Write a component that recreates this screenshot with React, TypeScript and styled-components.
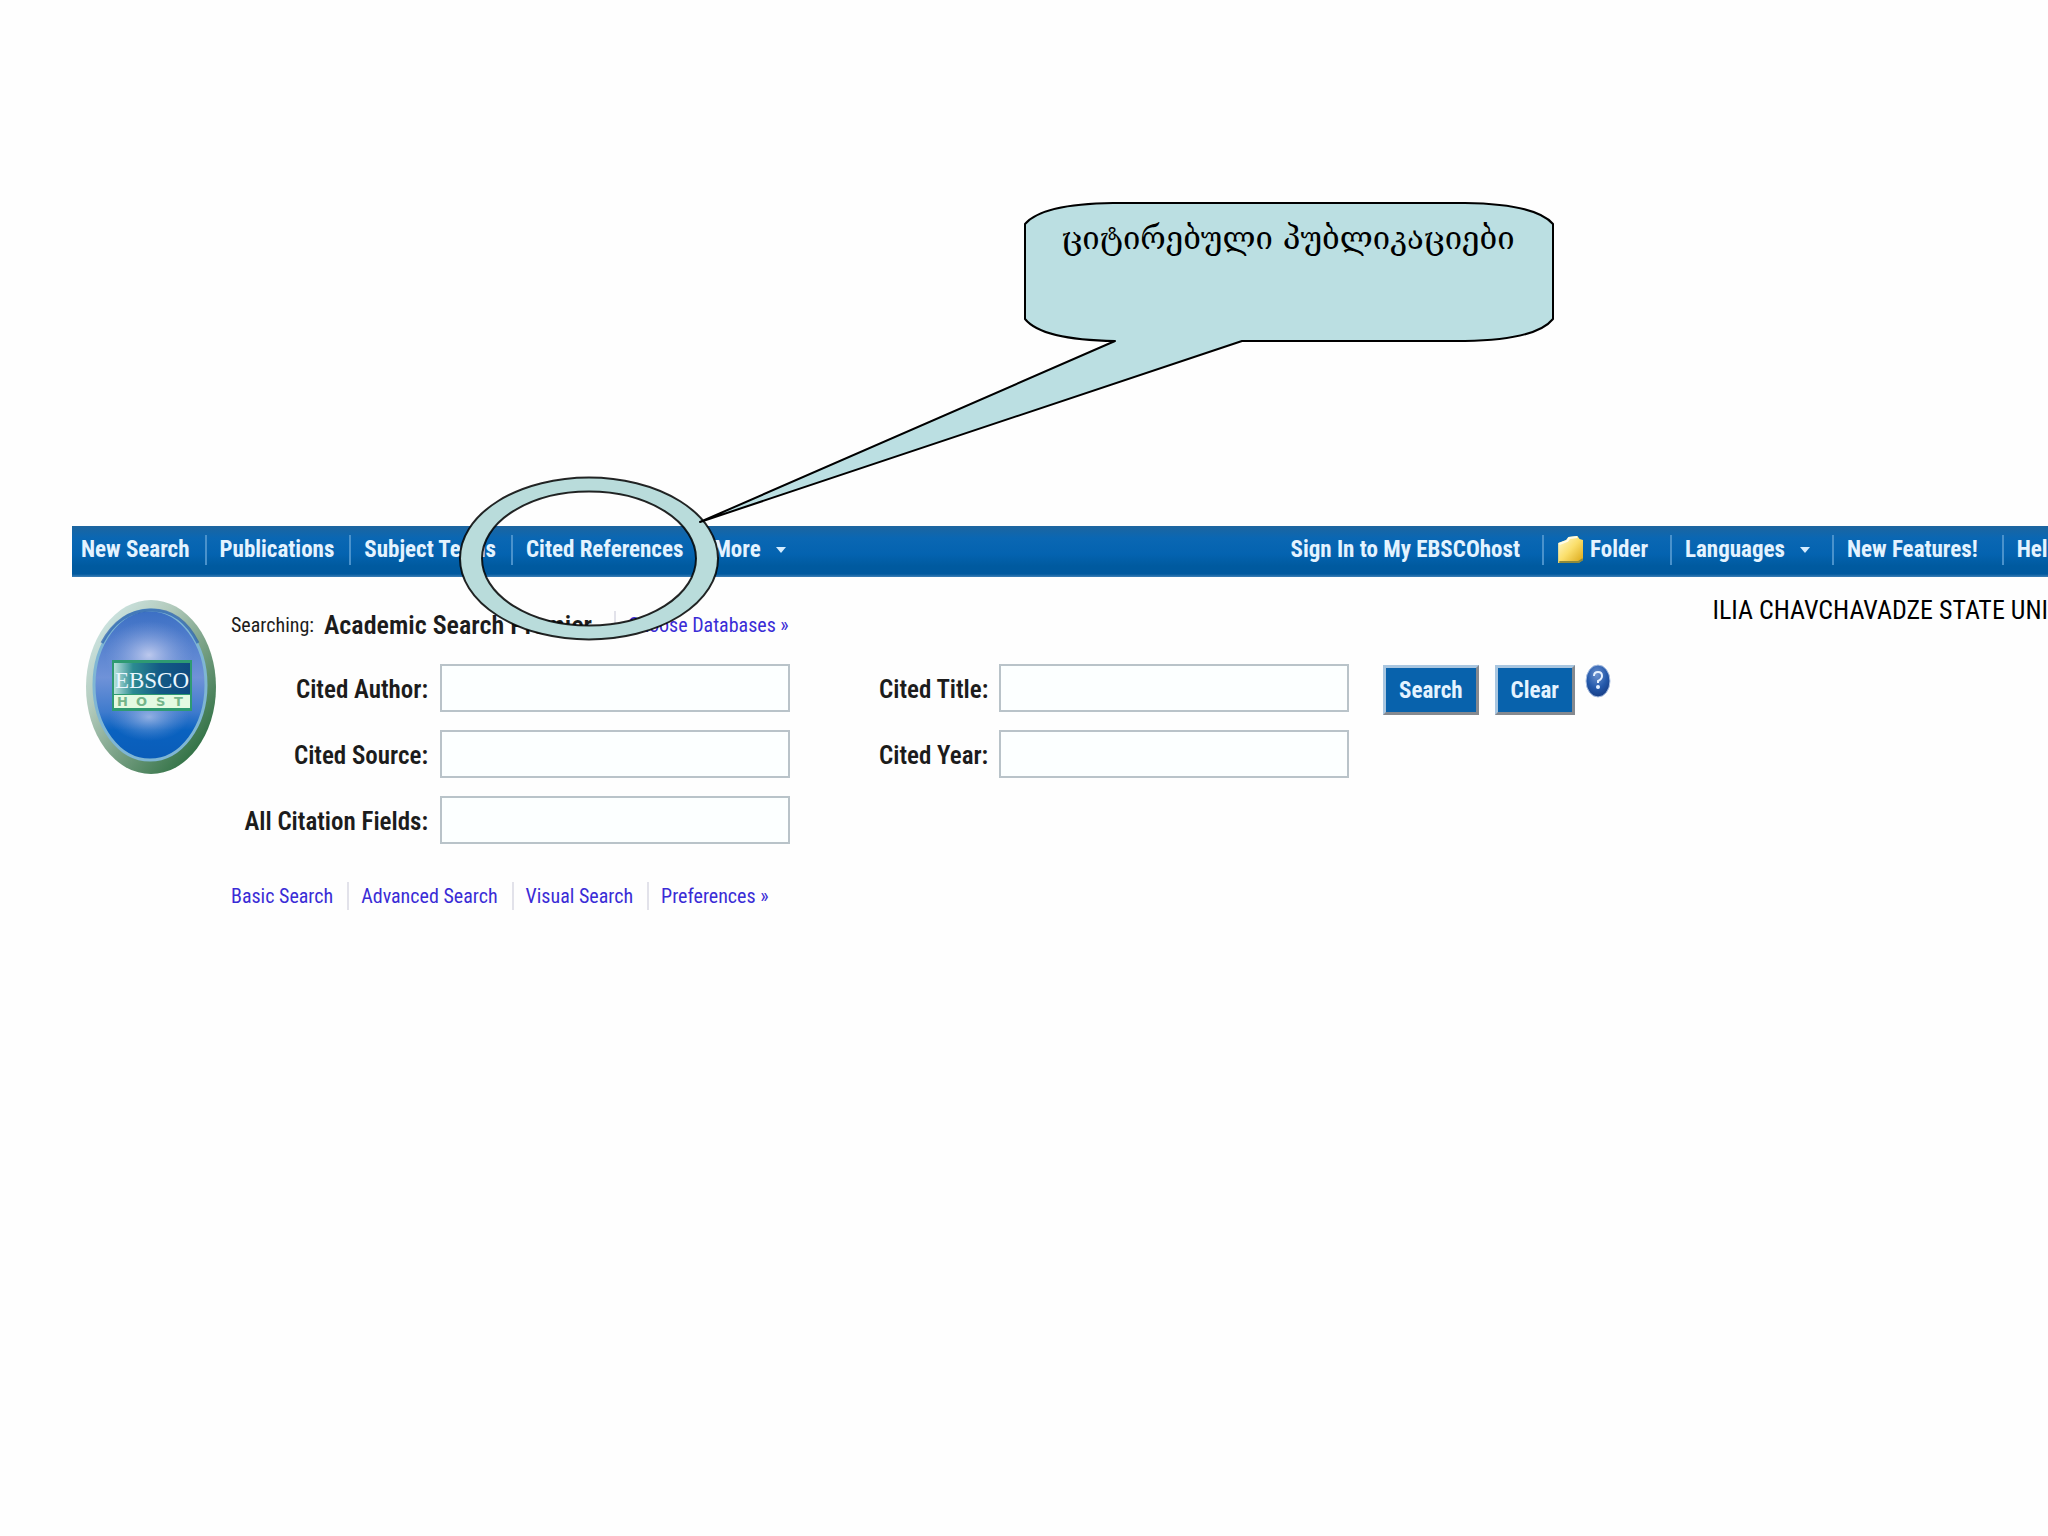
import React from 'react';
import styled, { createGlobalStyle } from 'styled-components';

const GlobalStyle = createGlobalStyle`
  *, *::before, *::after { box-sizing: border-box; }
  body {
    margin: 0;
    background: #fefefe;
    color: #1c1c1c;
    font-family: "Roboto Condensed", Roboto, "Liberation Sans", sans-serif;
  }
`;

const Page = styled.div`
  position: relative;
  overflow: hidden;
  min-height: 100vh;
  padding: 526px 0 0 72px;
`;

const NavBar = styled.nav`
  display: flex;
  align-items: center;
  justify-content: space-between;
  height: 51px;
  padding: 0 0 4px 9px;
  background: linear-gradient(#1d659f 0, #0a67b3 12px, #0463b0 28px, #005a9f 40px, #00599f 48px, #3d7fb6 51px);
`;

const NavGroup = styled.ul<{ $end?: boolean }>`
  display: flex;
  flex: none;
  margin: 0;
  margin-right: ${(p) => (p.$end ? '-11px' : '0')};
  padding: 0;
  list-style: none;
`;

const NavItem = styled.li<{ $gap?: number }>`
  display: flex;
  align-items: center;
  height: 30px;

  &:not(:first-child) {
    margin-left: ${(p) => p.$gap ?? 15}px;
    padding-left: 13px;
    border-left: 2px solid #4a92cc;
  }
`;

const NavLink = styled.a`
  display: flex;
  align-items: center;
  gap: 7px;
  color: #e4f3ff;
  font-size: 23px;
  font-weight: 700;
  line-height: 30px;
  text-decoration: none;
  white-space: nowrap;
`;

const Caret = styled.span`
  margin-left: 8px;
  border: 5px solid transparent;
  border-top: 6px solid #d4ecff;
  border-bottom: 0;
`;

const Body = styled.main`
  display: flex;
  align-items: flex-start;
  padding: 18px 0 0 13px;
`;

const LogoLink = styled.a`
  flex: none;
  width: 146px;
  padding-top: 4px;

  svg { display: block; }
`;

const Content = styled.div`
  flex: 1;
  min-width: 0;
`;

const TopRow = styled.div`
  display: flex;
  align-items: flex-start;
  margin-bottom: 24px;
`;

const Searching = styled.p`
  display: flex;
  align-items: center;
  margin: 0;
  padding-top: 15px;
  font-size: 20px;
  line-height: 30px;
  white-space: nowrap;

  strong {
    margin: 0 22px 0 10px;
    font-size: 26px;
    font-weight: 600;
  }
`;

const Institution = styled.p`
  margin: 0 0 0 auto;
  color: #000;
  font-size: 26px;
  line-height: 30px;
  white-space: nowrap;
`;

const TextLink = styled.a`
  color: #3a2cd6;
  font-size: 20px;
  line-height: 30px;
  text-decoration: none;
  white-space: nowrap;
`;

const Divider = styled.span`
  width: 2px;
  height: 28px;
  margin-right: 12px;
  background: #e2e2ea;
`;

const Form = styled.form`
  display: flex;
  align-items: flex-start;
`;

const Fields = styled.div<{ $labelWidth: number }>`
  display: grid;
  grid-template-columns: ${(p) => p.$labelWidth}px 350px;
  gap: 18px 12px;
  align-items: center;

  &:not(:first-child) { margin: 0 34px 0 89px; }
`;

const Label = styled.label`
  padding-top: 4px;
  font-size: 25px;
  font-weight: 600;
  line-height: 30px;
  text-align: right;
  white-space: nowrap;
`;

const Input = styled.input`
  width: 100%;
  height: 48px;
  padding: 0 10px;
  border: 2px solid #b9c3c9;
  border-radius: 0;
  background: #fcffff;
  font: inherit;
  font-size: 23px;
  outline: 0;
`;

const Actions = styled.div`
  display: flex;
  align-items: flex-start;
  gap: 16px;
`;

const Button = styled.button`
  height: 50px;
  margin-top: 1px;
  padding: 0 13px;
  border: 3px solid;
  border-color: #a9c6e0 #85898f #85898f #a9c6e0;
  background: #0862ac;
  color: #e4f3ff;
  font-family: inherit;
  font-size: 23px;
  font-weight: 700;
`;

const HelpButton = styled.button`
  margin-left: -6px;
  padding: 0;
  border: 0;
  background: none;

  svg { display: block; }
`;

const ModeLinks = styled.nav`
  display: flex;
  align-items: center;
  margin-top: 37px;

  a + span { margin-left: 14px; }
`;

const Annotation = styled.div`
  position: absolute;
  top: 200px;
  left: 456px;
  width: 1100px;
  height: 444px;
  pointer-events: none;

  svg { display: block; }
`;

const CalloutText = styled.p`
  position: absolute;
  top: 20px;
  left: 568px;
  width: 528px;
  margin: 0;
  color: #000;
  font-family: "DejaVu Serif", serif;
  font-size: 31px;
  line-height: 36px;
  text-align: center;
  white-space: nowrap;
`;

const FolderIcon = () => (
  <svg width="26" height="30" viewBox="0 0 23 30" preserveAspectRatio="none" aria-hidden="true">
    <defs>
      <linearGradient id="folder" x1="0" y1="0" x2="1" y2="1">
        <stop offset="0" stopColor="#fffbd6" />
        <stop offset="0.5" stopColor="#fbdf6c" />
        <stop offset="1" stopColor="#d9a514" />
      </linearGradient>
    </defs>
    <path d="M1 8 8 5 10 2 18 1 20 4 23 5V25L19 28H1Z" fill="url(#folder)" />
    <path d="M2 27H19L23 24" fill="none" stroke="#8d8a3c" strokeWidth="2" />
    <path d="M2 9 9 6 11 3 18 2" fill="none" stroke="#fffce6" strokeWidth="2" />
  </svg>
);

const HelpIcon = () => (
  <svg width="26" height="36" viewBox="0 0 26 36" aria-hidden="true">
    <defs>
      <radialGradient id="help" cx="0.45" cy="0.3" r="0.7">
        <stop offset="0" stopColor="#6d92cf" />
        <stop offset="0.6" stopColor="#2459ab" />
        <stop offset="1" stopColor="#173e86" />
      </radialGradient>
    </defs>
    <ellipse cx="13" cy="17" rx="12" ry="16" fill="url(#help)" stroke="#a9bfe2" />
    <path d="M9 12Q9 8 13 8T17 12Q17 15 13 17V19" fill="none" stroke="#e6f1ff" strokeWidth="2" />
    <circle cx="13" cy="23" r="2" fill="#e6f1ff" />
  </svg>
);

const EbscoLogo = () => (
  <svg width="132" height="176" viewBox="0 0 132 176" role="img" aria-label="EBSCOhost">
    <defs>
      <linearGradient id="rim" x1="0.1" y1="0.1" x2="0.85" y2="0.9">
        <stop offset="0" stopColor="#cfe6e4" />
        <stop offset="0.3" stopColor="#b3cbbd" />
        <stop offset="0.6" stopColor="#7ba287" />
        <stop offset="1" stopColor="#2f7043" />
      </linearGradient>
      <linearGradient id="glass" x1="0" y1="0" x2="0" y2="1">
        <stop offset="0" stopColor="#3b6fc4" />
        <stop offset="0.45" stopColor="#6f92d8" />
        <stop offset="0.68" stopColor="#3f7bcd" />
        <stop offset="0.8" stopColor="#0a62c0" />
        <stop offset="1" stopColor="#0a5cb8" />
      </linearGradient>
      <radialGradient id="glow">
        <stop offset="0" stopColor="#d4d9f4" />
        <stop offset="1" stopColor="#8ea8e0" stopOpacity="0" />
      </radialGradient>
      <linearGradient id="plate" x1="0" y1="0" x2="1" y2="0">
        <stop offset="0" stopColor="#b9e2dc" />
        <stop offset="0.25" stopColor="#2c8b92" />
        <stop offset="0.6" stopColor="#135a85" />
        <stop offset="1" stopColor="#0f4a80" />
      </linearGradient>
    </defs>
    <ellipse cx="66" cy="88" rx="65" ry="87" fill="url(#rim)" />
    <ellipse cx="65" cy="86" rx="56" ry="75" fill="url(#glass)" stroke="#7fb6d4" strokeWidth="3" />
    <ellipse cx="64" cy="56" rx="44" ry="34" fill="url(#glow)" opacity="0.8" />
    <ellipse cx="64" cy="118" rx="40" ry="24" fill="url(#glow)" opacity="0.6" />
    <path d="M17 44Q34 12 65 11T113 44" fill="none" stroke="#2a5fae" strokeWidth="3" opacity="0.7" />
    <rect x="27" y="61" width="80" height="51" fill="#2e9a72" />
    <rect x="29" y="64" width="76" height="31" fill="url(#plate)" />
    <rect x="29" y="96" width="76" height="13" fill="#e4fae2" />
    <text x="67" y="89" textAnchor="middle" fontFamily="Liberation Serif, serif" fontSize="23" fill="#e9f6ff">EBSCO</text>
    <text x="32 51 71 89" y="107" fontFamily="DejaVu Sans, sans-serif" fontWeight="700" fontSize="13" fill="#74b58a">HOST</text>
  </svg>
);

const CalloutShape = () => (
  <svg width="1100" height="444" viewBox="0 0 1100 444" fill="#bbdfe2" stroke="#000" strokeWidth="2" aria-hidden="true">
    <path
      fill="#b9dcdb"
      fillRule="evenodd"
      strokeOpacity="0.85"
      d="M4 358.500A129 81 0 0 1 262 358.500A129 81 0 0 1 4 358.500ZM26 358.500A107 67 0 0 0 240 358.500A107 67 0 0 0 26 358.500Z"
    />
    <path
      strokeLinejoin="round"
      d="M657 3H1009Q1080 4 1097 24V119Q1080 140 1009 141H786L244 322 659 141Q586 140 569 119V24Q586 4 657 3Z"
    />
  </svg>
);

const primaryLinks = ['New Search', 'Publications', 'Subject Terms', 'Cited References'];
const modeLinks = ['Basic Search', 'Advanced Search', 'Visual Search', 'Preferences »'];

const Field = ({ id, label }: { id: string; label: string }) => (
  <>
    <Label htmlFor={id}>{label}</Label>
    <Input id={id} type="text" />
  </>
);

export default function App() {
  return (
    <Page>
      <GlobalStyle />
      <NavBar aria-label="Main">
        <NavGroup>
          {primaryLinks.map((text) => (
            <NavItem key={text}>
              <NavLink href="#">{text}</NavLink>
            </NavItem>
          ))}
          <NavItem>
            <NavLink href="#">More<Caret /></NavLink>
          </NavItem>
        </NavGroup>
        <NavGroup $end>
          <NavItem>
            <NavLink href="#">Sign In to My EBSCOhost</NavLink>
          </NavItem>
          <NavItem $gap={22}>
            <NavLink href="#"><FolderIcon />Folder</NavLink>
          </NavItem>
          <NavItem $gap={22}>
            <NavLink href="#">Languages<Caret /></NavLink>
          </NavItem>
          <NavItem $gap={22}>
            <NavLink href="#">New Features!</NavLink>
          </NavItem>
          <NavItem $gap={24}>
            <NavLink href="#">Help</NavLink>
          </NavItem>
        </NavGroup>
      </NavBar>

      <Body>
        <LogoLink href="#"><EbscoLogo /></LogoLink>
        <Content>
          <TopRow>
            <Searching>
              Searching: <strong>Academic Search Premier</strong>
              <Divider />
              <TextLink href="#">Choose Databases »</TextLink>
            </Searching>
            <Institution>ILIA CHAVCHAVADZE STATE UNI</Institution>
          </TopRow>
          <Form onSubmit={(e) => e.preventDefault()}>
            <Fields $labelWidth={197}>
              <Field id="author" label="Cited Author:" />
              <Field id="source" label="Cited Source:" />
              <Field id="all" label="All Citation Fields:" />
            </Fields>
            <Fields $labelWidth={108}>
              <Field id="title" label="Cited Title:" />
              <Field id="year" label="Cited Year:" />
            </Fields>
            <Actions>
              <Button type="submit">Search</Button>
              <Button type="reset">Clear</Button>
              <HelpButton type="button" aria-label="Help"><HelpIcon /></HelpButton>
            </Actions>
          </Form>
          <ModeLinks aria-label="Search modes">
            {modeLinks.map((text, i) => (
              <React.Fragment key={text}>
                {i > 0 && <Divider />}
                <TextLink href="#">{text}</TextLink>
              </React.Fragment>
            ))}
          </ModeLinks>
        </Content>
      </Body>

      <Annotation>
        <CalloutShape />
        <CalloutText>ციტირებული პუბლიკაციები</CalloutText>
      </Annotation>
    </Page>
  );
}
